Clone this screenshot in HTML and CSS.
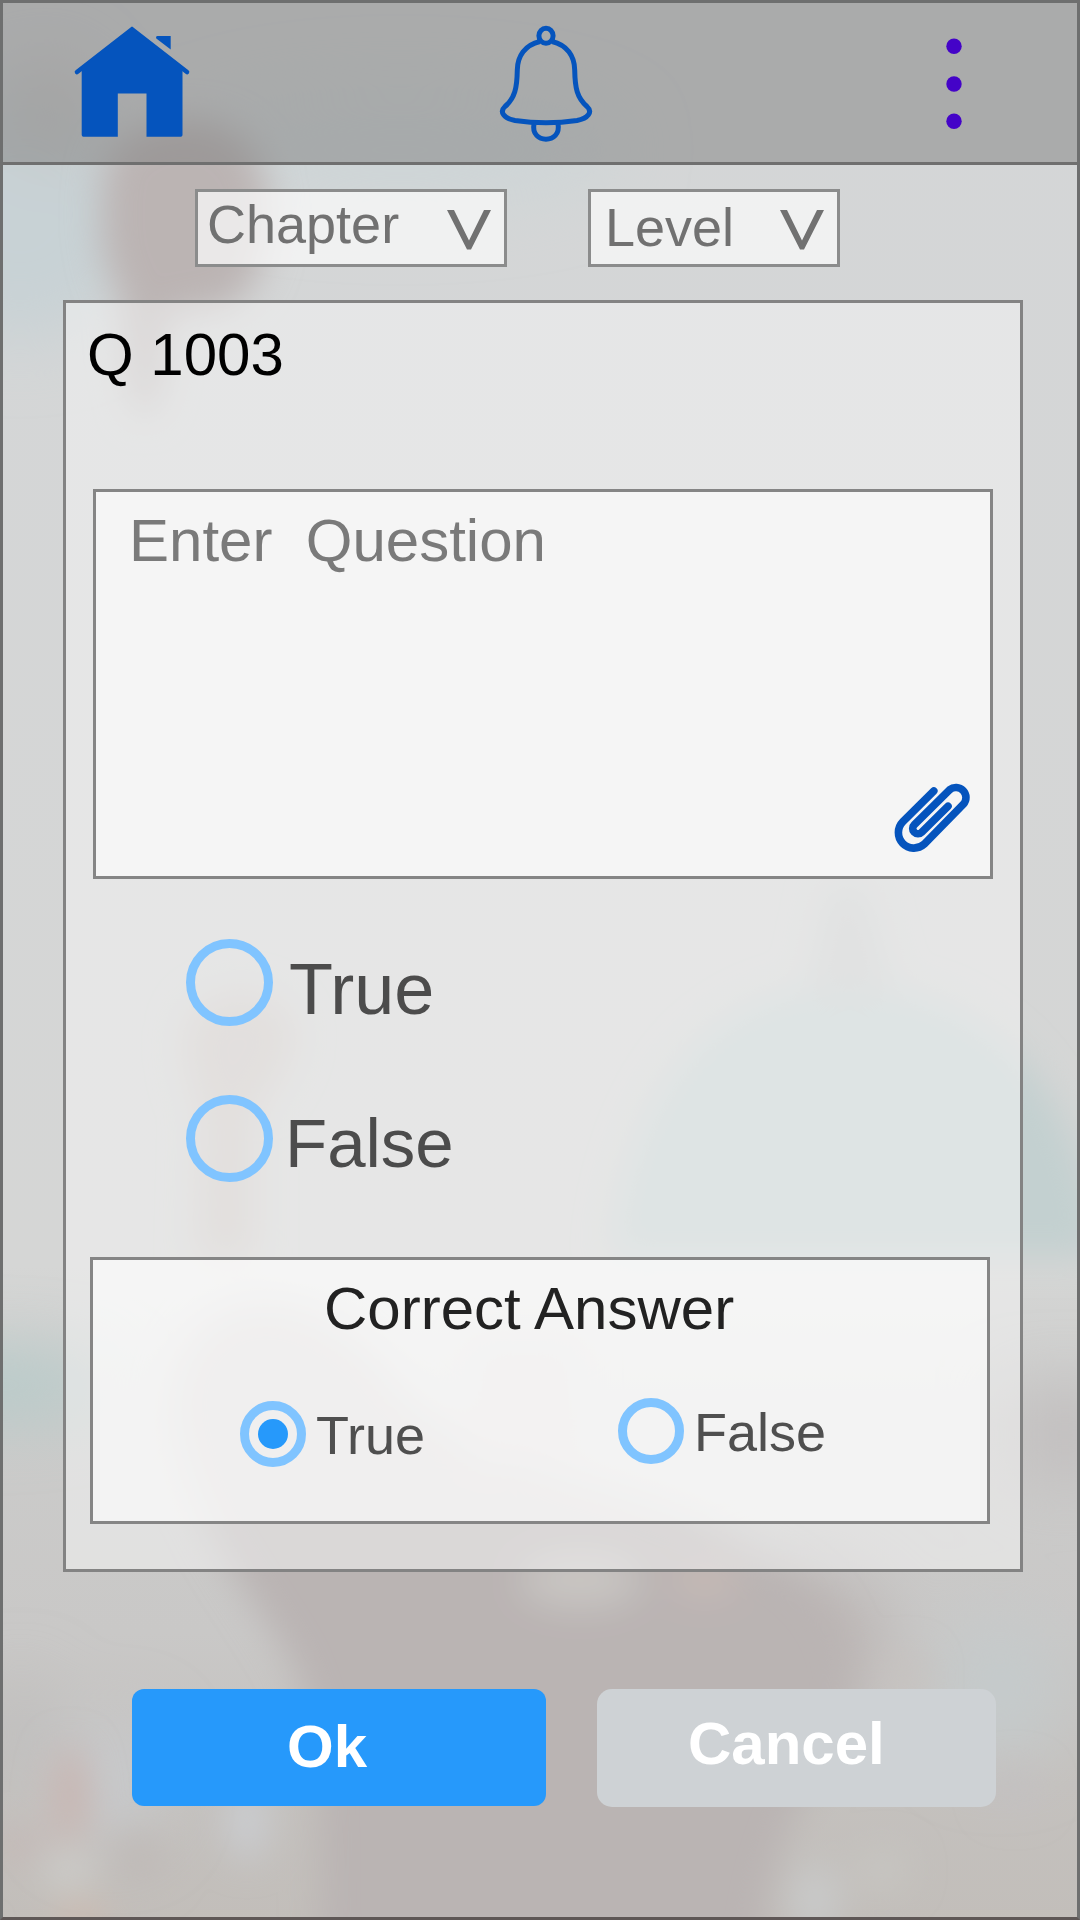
FILE: index.html
```html
<!DOCTYPE html>
<html lang="en">
<head>
<meta charset="utf-8">
<title>Question editor</title>
<link rel="stylesheet" href="styles.css">
</head>
<body>
<div class="screen">
  <svg class="backdrop" viewBox="0 0 1080 1920" aria-hidden="true">
    <defs>
      <filter id="soft" x="-60%" y="-60%" width="220%" height="220%"><feGaussianBlur stdDeviation="18"/></filter>
      <filter id="softer" x="-60%" y="-60%" width="220%" height="220%"><feGaussianBlur stdDeviation="34"/></filter>
      <linearGradient id="sky" x1="0" y1="0" x2="0" y2="1">
        <stop offset="0" stop-color="#d4d6d7"/>
        <stop offset="0.66" stop-color="#d5d6d5"/>
        <stop offset="0.74" stop-color="#cbcbca"/>
        <stop offset="0.85" stop-color="#c9c8c7"/>
        <stop offset="0.93" stop-color="#c4c1be"/>
        <stop offset="1" stop-color="#c2beba"/>
      </linearGradient>
    </defs>
    <rect width="1080" height="1920" fill="url(#sky)"/>
    <g filter="url(#softer)">
      <ellipse cx="20" cy="210" rx="130" ry="130" fill="#c8d2d5"/>
      <ellipse cx="400" cy="150" rx="220" ry="55" fill="#ced5d7"/>
      <ellipse cx="50" cy="110" rx="30" ry="50" fill="#c6c2c0"/>
      <ellipse cx="0" cy="1385" rx="110" ry="30" fill="#b4cac9"/>
      <rect x="1010" y="1390" width="110" height="90" fill="#c2bfbf"/>
      <ellipse cx="1000" cy="1690" rx="60" ry="70" fill="#c5cbcc"/>
      <ellipse cx="110" cy="1780" rx="50" ry="60" fill="#c8cacd"/>
      <ellipse cx="20" cy="1730" rx="24" ry="50" fill="#bcbcbc"/>
      <ellipse cx="800" cy="1640" rx="90" ry="70" fill="#bbb5b4"/>
    </g>
    <g filter="url(#soft)">
      <path d="M105 165Q120 122 190 120Q262 124 268 200Q272 285 225 308L165 318Q165 410 142 420Q125 390 123 300Q92 260 105 165Z" fill="#bbb4b3"/>
      <path d="M610 1260C625 1090 710 985 845 985C980 985 1080 1080 1100 1250V1256H610Z" fill="#c3d0d0"/>
      <path d="M805 995L828 885H866L895 995Z" fill="#c9cccc"/>
      <path d="M184 1040Q184 1000 240 990Q298 1000 296 1040Q286 1080 256 1110L256 1260H196L200 1110Q182 1070 184 1040Z" fill="#cdc6c2"/>
      <path d="M170 1390C190 1290 290 1270 380 1360C460 1490 640 1460 760 1555C830 1590 860 1640 850 1740C800 1790 770 1850 760 1960H322C315 1840 330 1740 290 1660C250 1590 170 1500 170 1390Z" fill="#bab4b3"/>
      <ellipse cx="580" cy="1580" rx="60" ry="26" fill="#c9c6c3"/>
      <ellipse cx="705" cy="1580" rx="34" ry="16" fill="#c8bab5"/>
      <rect x="470" y="1340" width="110" height="120" fill="#cbc4c4"/>
      <ellipse cx="70" cy="1795" rx="18" ry="50" fill="#c8b5b1"/>
      <ellipse cx="20" cy="1845" rx="26" ry="14" fill="#c4b7b5"/>
      <ellipse cx="68" cy="1870" rx="24" ry="20" fill="#cdcdca"/>
      <ellipse cx="247" cy="1820" rx="20" ry="40" fill="#cbcdd1"/>
      <ellipse cx="140" cy="1860" rx="30" ry="26" fill="#bfbab7"/>
      <ellipse cx="815" cy="1900" rx="24" ry="36" fill="#c9caca"/>
      <ellipse cx="882" cy="1870" rx="26" ry="20" fill="#c7c6c2"/>
      <ellipse cx="1015" cy="1790" rx="24" ry="20" fill="#c3c0c1"/>
      <ellipse cx="905" cy="1675" rx="20" ry="20" fill="#c7c2bf"/>
      <ellipse cx="80" cy="1916" rx="24" ry="12" fill="#d0b9ab"/>
    </g>
  </svg>

  <header class="topbar">
    <svg class="icon-home" viewBox="71 20 122 120">
      <path d="M132 29.300L187 72M132 29.300L77 72" stroke="#0554bd" stroke-width="4.600" stroke-linecap="round"/>
      <path d="M132 28L182.500 67V135Q182.500 136.700 180.800 136.700H146.500V93.500H117.800V136.700H83.400Q81.700 136.700 81.700 135V67Z" fill="#0554bd"/>
      <path d="M157.500 36H170.700V49.500L156.300 38.500Q155.500 36 157.500 36Z" fill="#0554bd"/>
    </svg>
    <svg class="icon-bell" viewBox="496 20 100 126">
      <g fill="none" stroke="#0554bd" stroke-width="5">
        <ellipse cx="546" cy="35.800" rx="7.100" ry="7.500"/>
        <path d="M540 41.500C525 45 517.500 56 517.300 70C517 88 515 98 505 106.500C499 112 504 118.500 515 120.500C535 123.500 557 123.500 577 120.500C588 118.500 593 112 587 106.500C577 98 575 88 574.700 70C574.500 56 567 45 552 41.500"/>
        <path d="M534 124C532 134 539 139.200 546 139.200C553 139.200 560 134 558 124"/>
      </g>
    </svg>
    <svg class="icon-more" viewBox="944 36 20 96">
      <g fill="#4403c8"><circle cx="954" cy="46.300" r="7.700"/><circle cx="954" cy="84" r="7.700"/><circle cx="954" cy="121.300" r="7.700"/></g>
    </svg>
  </header>

  <div class="filters">
    <div class="select chapter"><span>Chapter</span>
      <svg class="caret" viewBox="0 0 44 40"><path d="M0 0H7L22 30.500L37 0H44L24 39.500H20Z" fill="#717171"/></svg>
    </div>
    <div class="select level"><span>Level</span>
      <svg class="caret" viewBox="0 0 44 40"><path d="M0 0H7L22 30.500L37 0H44L24 39.500H20Z" fill="#717171"/></svg>
    </div>
  </div>

  <main class="panel">
    <h1 class="number">Q 1003</h1>
    <div class="question"><span class="placeholder">Enter  Question</span>
      <svg class="icon-clip" viewBox="893 781 80 73">
        <path d="M934.800 791L903.800 821.800A15.500 15.500 0 0 0 925.200 844.200L964.400 804.200A10 10 0 0 0 950.600 789.800L915.300 824.700A5.300 5.300 0 0 0 922.700 832.300L949 806.200" fill="none" stroke="#0554bd" stroke-width="7.600" stroke-linecap="round"/>
      </svg>
    </div>
    <div class="options">
      <div class="option option-true"><i class="ring"></i><span>True</span></div>
      <div class="option option-false"><i class="ring"></i><span>False</span></div>
    </div>
    <section class="answer">
      <h2 class="answer-title">Correct Answer</h2>
      <div class="choices">
        <div class="choice choice-true"><i class="ring small checked"></i><span>True</span></div>
        <div class="choice"><i class="ring small"></i><span>False</span></div>
      </div>
    </section>
  </main>

  <div class="actions">
    <button class="btn ok">Ok</button>
    <button class="btn cancel">Cancel</button>
  </div>
</div>
</body>
</html>
```
FILE: styles.css
```css
* { box-sizing: border-box; }
body { margin: 0; font-family: "Liberation Sans", Arial, sans-serif; }
svg { display: block; }
h1, h2 { margin: 0; font-weight: 400; }
span, h1, h2 { line-height: 1; white-space: pre; }

.screen {
  position: relative;
  width: 1080px;
  height: 1920px;
  overflow: hidden;
  border: 3px solid #6e6f6f;
  border-bottom-color: #5e5756;
  display: flex;
  flex-direction: column;
  isolation: isolate;
}
.backdrop { position: absolute; left: -3px; top: -3px; width: 1080px; height: 1920px; z-index: -1; }

.topbar {
  display: flex;
  height: 162px;
  padding: 17px 0 0 68px;
  background: rgba(127, 127, 127, 0.5);
  border-bottom: 3px solid #6f6f6f;
}
.icon-home { width: 122px; height: 120px; }
.icon-bell { width: 100px; height: 126px; margin-left: 303px; }
.icon-more { width: 20px; height: 96px; margin: 16px 0 0 348px; }

.filters { display: flex; gap: 81px; padding: 24px 0 0 192px; }
.select {
  display: flex;
  justify-content: space-between;
  height: 78px;
  border: 3px solid #8b8c8c;
  background: rgba(250, 250, 250, 0.75);
  color: #717171;
  font-size: 54px;
}
.chapter { width: 312px; padding: 5px 13px 0 9px; }
.level { width: 252px; padding: 8px 13px 0 14px; }
.caret { width: 44px; height: 40px; margin-top: 13px; }
.level .caret { margin-top: 10px; }

.panel {
  width: 960px;
  height: 1272px;
  margin: 33px 0 0 60px;
  border: 3px solid #838383;
  background: rgba(242, 242, 242, 0.57);
}
.number { height: 186px; padding: 22px 0 0 21px; font-size: 60px; color: #000; }
.question {
  display: flex;
  justify-content: space-between;
  width: 900px;
  height: 390px;
  margin-left: 27px;
  padding: 19px 18px 22px 33px;
  border: 3px solid #858585;
  background: rgba(255, 255, 255, 0.6);
}
.placeholder { font-size: 60px; color: #7a7a7a; }
.icon-clip { width: 80px; height: 73px; align-self: flex-end; }

.options { display: flex; flex-direction: column; gap: 69px; padding: 60px 0 0 120px; }
.option { display: flex; height: 87px; color: #4c4c4c; }
.option-true span { font-size: 72px; margin: 14px 0 0 16px; }
.option-false span { font-size: 69px; margin: 14px 0 0 12px; }

.ring {
  display: flex;
  flex: none;
  align-items: center;
  justify-content: center;
  width: 87px;
  height: 87px;
  border: 9px solid #80c4ff;
  border-radius: 50%;
}
.small { width: 66px; height: 66px; }
.checked::after { content: ""; width: 30px; height: 30px; border-radius: 50%; background: #2699fb; }

.answer {
  width: 900px;
  height: 267px;
  margin: 75px 0 0 24px;
  border: 3px solid #858585;
  background: rgba(255, 255, 255, 0.6);
}
.answer-title { padding: 19px 0 0 231px; font-size: 60px; color: #222; }
.choices { display: flex; padding: 59px 0 0 147px; }
.choice { display: flex; color: #4f4f4f; font-size: 54px; }
.choice-true { width: 378px; padding-top: 3px; }
.choice span { margin: 7px 0 0 10px; }

.actions { display: flex; gap: 51px; padding: 117px 0 0 129px; }
.btn {
  display: block;
  border: 0;
  color: #fff;
  font: bold 60px/60px "Liberation Sans", Arial, sans-serif;
  text-align: left;
}
.ok { width: 414px; height: 117px; padding: 0 0 1px 155px; border-radius: 12px; background: #2699fb; }
.cancel { width: 399px; height: 118px; padding: 0 0 8px 91px; border-radius: 15px; background: #ced2d5; }
```
